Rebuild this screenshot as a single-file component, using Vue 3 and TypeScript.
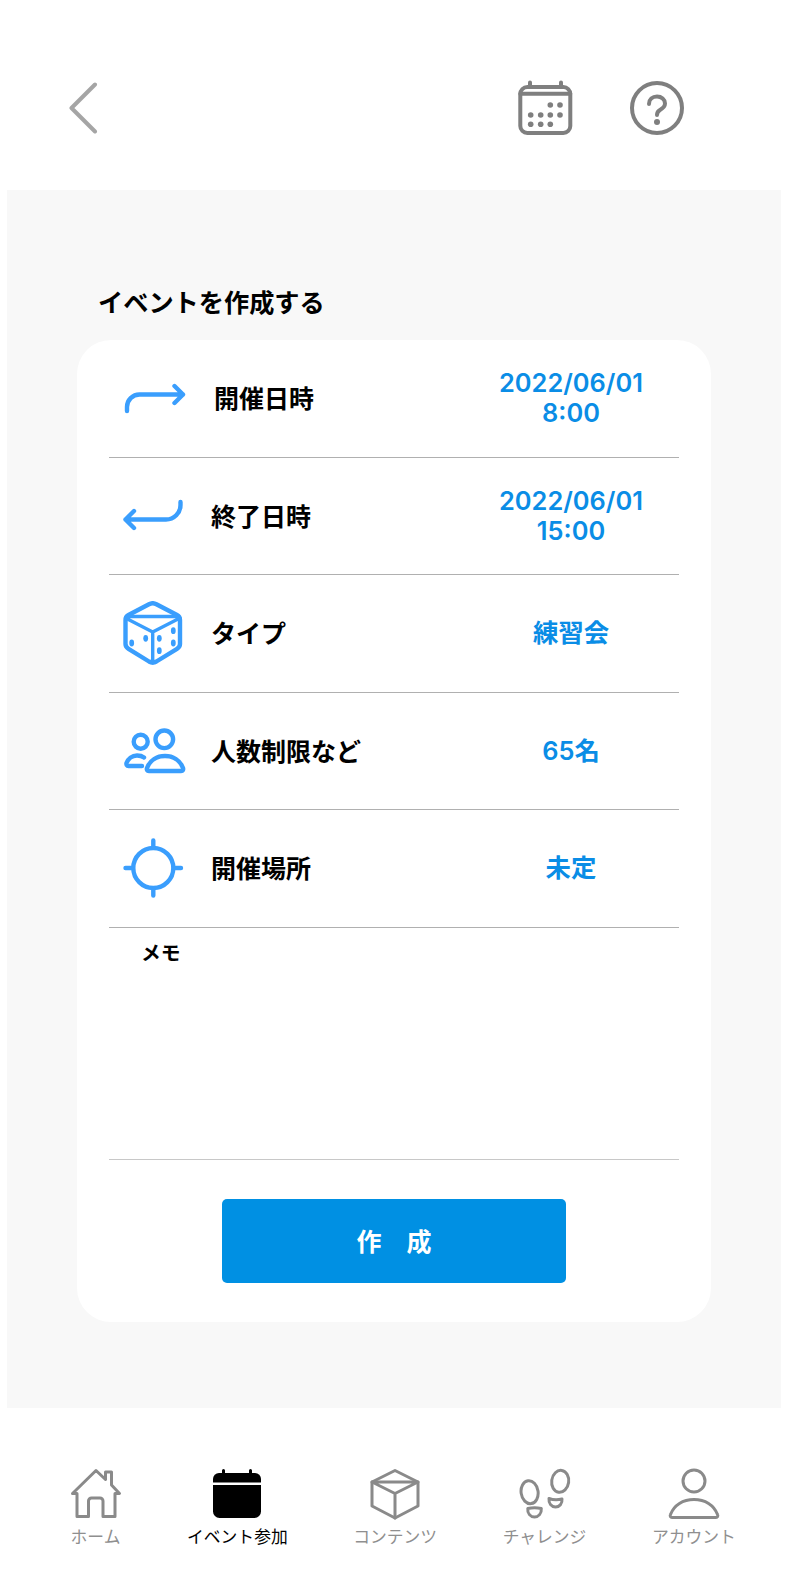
<script setup lang="ts">
// Create-event screen: top bar, settings card, tab bar.
interface Row {
    key: string;
    label: string;
    value: string[];
}

const rows: Row[] = [
    { key: "start", label: "開催日時", value: ["2022/06/01", "8:00"] },
    { key: "end", label: "終了日時", value: ["2022/06/01", "15:00"] },
    { key: "type", label: "タイプ", value: ["練習会"] },
    { key: "people", label: "人数制限など", value: ["65名"] },
    { key: "place", label: "開催場所", value: ["未定"] },
];

const tabs = [
    { key: "home", label: "ホーム" },
    { key: "event", label: "イベント参加" },
    { key: "content", label: "コンテンツ" },
    { key: "challenge", label: "チャレンジ" },
    { key: "account", label: "アカウント" },
];

const dice = [
    [9.7, 42],
    [23.7, 37.3],
    [37.3, 37.3],
    [37.3, 49.7],
    [51.3, 29.7],
    [51.3, 42],
];

const calDots = [
    [33.3, 25],
    [43, 25],
    [13.7, 35],
    [23.7, 35],
    [33.3, 35],
    [43, 35],
    [13.7, 44.3],
    [23.7, 44.3],
    [33.3, 44.3],
];
</script>

<template>
    <div class="screen">
        <header class="topbar">
            <button class="icon-btn back" aria-label="戻る">
                <svg width="30" height="52" viewBox="0 0 30 52" fill="none" stroke="#a5a5a5" stroke-width="4" stroke-linecap="round" stroke-linejoin="round">
                    <path d="M27 2.5 L3.5 26 L27 49.5" />
                </svg>
            </button>
            <div class="topbar-right">
                <svg width="56" height="56" viewBox="0 0 56 56" fill="none" stroke="#7f7f7f" stroke-width="4" stroke-linecap="round">
                    <rect x="3.3" y="7" width="50" height="46" rx="7" />
                    <path d="M3.3 13.7 H53.3 M13 2.5 V6 M44 2.5 V6" />
                    <circle v-for="d in calDots" :key="d.join()" :cx="d[0]" :cy="d[1]" r="2.8" fill="#7f7f7f" stroke="none" />
                </svg>
                <svg width="56" height="56" viewBox="0 0 56 56" fill="none" stroke="#7f7f7f" stroke-width="4" stroke-linecap="round">
                    <circle cx="28" cy="28" r="25" />
                    <path d="M20 24 C20 19.5 23.5 16.5 28 16.5 C32.5 16.5 36 19.5 36 23.5 C36 27 33.5 28.5 31 30 C29 31.2 28 32.5 28 35" />
                    <circle cx="28" cy="42" r="3" fill="#7f7f7f" stroke="none" />
                </svg>
            </div>
        </header>

        <main class="panel">
            <h1 class="title">イベントを作成する</h1>
            <section class="card">
                <div v-for="row in rows" :key="row.key" :class="['row', 'row-' + row.key]">
                    <div class="row-icon">
                        <svg width="64" height="64" viewBox="0 0 64 64" fill="none" stroke="#3a9efd" stroke-width="4.4" stroke-linecap="round" stroke-linejoin="round">
                            <template v-if="row.key === 'start'">
                                <path d="M5 45 V41 A12.5 12.5 0 0 1 17.5 28.5 H61 M52.5 20 L61 28.5 L52.5 37" />
                            </template>
                            <template v-else-if="row.key === 'end'">
                                <path d="M58.5 18 V21 A14.5 14.5 0 0 1 44 35.5 H3.5 M12 27 L3.5 35.5 L12 44" />
                            </template>
                            <template v-else-if="row.key === 'type'">
                                <path d="M27 3.2 Q30.7 1.2 34.4 3.2 L55 14 Q58 15.6 58 19 V43 Q58 46 55 47.8 L34.4 60.5 Q30.7 62.6 27 60.5 L6.5 47.8 Q3.5 46 3.5 43 V19 Q3.5 15.6 6.5 14 Z" />
                                <path d="M3.5 17 L30.7 31 L58 17 M30.7 31 V62 M5 15.5 H56.5" stroke-width="3.4" />
                                <ellipse v-for="d in dice" :key="d.join()" :cx="d[0]" :cy="d[1]" rx="2.4" ry="3.4" fill="#3a9efd" stroke="none" />
                            </template>
                            <template v-else-if="row.key === 'people'">
                                <circle cx="42.3" cy="20.3" r="8.8" />
                                <circle cx="18.7" cy="22.7" r="7" />
                                <path d="M27 52 H59 C61 52 61.5 50.5 61 49 C58 41 51 37 43 37 S28 41 25 49 C24.5 50.5 25 52 27 52 Z" />
                                <path d="M22 38.5 C20 37 17 36.5 15 36.5 C10 36.5 6 40 4.5 44 C4.1 45.5 4.8 47 6.5 47 H20" />
                            </template>
                            <template v-else>
                                <circle cx="31.3" cy="32" r="20" />
                                <path d="M31.3 4.5 V10 M31.3 54 V59.5 M3.5 32 H9.5 M53 32 H59" />
                            </template>
                        </svg>
                    </div>
                    <span class="row-label">{{ row.label }}</span>
                    <div class="row-value">
                        <div v-for="line in row.value" :key="line">{{ line }}</div>
                    </div>
                </div>
                <div class="memo">
                    <span class="memo-label">メモ</span>
                </div>
                <div class="actions">
                    <button class="submit">作　成</button>
                </div>
            </section>
        </main>

        <nav class="tabs">
            <div v-for="tab in tabs" :key="tab.key" :class="['tab', { active: tab.key === 'event' }]">
                <svg width="52" height="52" viewBox="0 0 52 52" fill="none" stroke="#8a8a8a" stroke-width="3" stroke-linecap="round" stroke-linejoin="round">
                    <template v-if="tab.key === 'home'">
                        <path d="M2.5 25.5 L26 2.5 L35.5 11.5 V4 H41.5 V17 L49.5 25.5 H45 V48.5 H33 V33 A3 3 0 0 0 30 30 H21.5 A3 3 0 0 0 18.5 33 V48.5 H7 V25.5 Z" />
                    </template>
                    <template v-else-if="tab.key === 'event'">
                        <path d="M12.5 2.5 V7 M39.5 2.5 V7" stroke="#000" />
                        <path d="M2 14.5 V11 A6 6 0 0 1 8 5 H44 A6 6 0 0 1 50 11 V14.5 Z" fill="#000" stroke="none" />
                        <path d="M2 17 H50 V43.5 A6.5 6.5 0 0 1 43.5 50 H8.5 A6.5 6.5 0 0 1 2 43.5 Z" fill="#000" stroke="none" />
                    </template>
                    <template v-else-if="tab.key === 'content'">
                        <path d="M26 2.5 L49 14 V38 L26 50 L3 38 V14 Z" />
                        <path d="M3 14 L26 25.5 L49 14 H3 M26 25.5 V50" />
                    </template>
                    <template v-else-if="tab.key === 'challenge'">
                        <ellipse cx="10.6" cy="24.2" rx="8.5" ry="11.5" transform="rotate(-8 10.6 24.2)" />
                        <ellipse cx="41.2" cy="13.3" rx="8.5" ry="11" transform="rotate(8 41.2 13.3)" />
                        <path d="M8.8 40.5 C13 39.5 18 39.5 22.3 40.5 C22.8 45.5 19.5 49 15.5 49 C11.5 49 8.2 45.5 8.8 40.5 Z" />
                        <path d="M30 30.5 C34 32 39 32 43 31 C43.5 35.5 40.5 39 36.5 39 C32.5 39 29.5 35.5 30 30.5 Z" />
                    </template>
                    <template v-else>
                        <circle cx="26" cy="13" r="11" />
                        <path d="M4 49.5 H48 C49.5 49.5 50.3 48 49.5 46.5 C46 37 37 31.5 26 31.5 S6 37 2.5 46.5 C1.7 48 2.5 49.5 4 49.5 Z" />
                    </template>
                </svg>
                <span class="tab-label">{{ tab.label }}</span>
            </div>
        </nav>
    </div>
</template>

<style scoped>
.screen {
    width: 792px;
    height: 1576px;
    background: #fff;
    font-family: "Noto Sans CJK JP", "Noto Sans", sans-serif;
    overflow: hidden;
}

.topbar {
    height: 190px;
    box-sizing: border-box;
    padding: 80px 107px 0 67.5px;
    display: flex;
    justify-content: space-between;
    align-items: flex-start;
}
.icon-btn {
    border: none;
    background: none;
    padding: 0;
    display: block;
}
.back {
    padding-top: 2px;
}
.topbar-right {
    display: flex;
    gap: 56px;
}

.panel {
    height: 1218px;
    box-sizing: border-box;
    margin: 0 11px 0 7px;
    padding: 92px 70px 0;
    background: #f8f8f8;
}
.title {
    margin: 0 0 20px 21px;
    font-size: 25.2px;
    line-height: 38px;
    font-weight: 700;
    color: #000;
}

.card {
    width: 634px;
    background: #fff;
    border-radius: 34px;
    padding: 0 32px 39px;
    box-sizing: border-box;
}
.row {
    height: 117.5px;
    box-sizing: border-box;
    border-bottom: 1px solid #b0b0b0;
    display: flex;
    align-items: center;
}
.row-icon {
    width: 102px;
    padding-left: 13px;
    box-sizing: border-box;
    flex: none;
}
.row-icon svg {
    display: block;
}
.row-label {
    flex: 1;
    font-size: 25px;
    line-height: 36px;
    margin-top: -2px;
    font-weight: 700;
    color: #000;
}
.row-start .row-label {
    margin-left: 3px;
}
.row-value {
    width: 200px;
    margin-right: 8px;
    text-align: center;
    font-family: Inter, "Noto Sans CJK JP", sans-serif;
    font-size: 25.4px;
    line-height: 30px;
    font-weight: 600;
    color: #0a8de6;
}

.memo {
    height: 232.5px;
    box-sizing: border-box;
    border-bottom: 1px solid #c8c8c8;
    padding: 9px 0 0 32px;
}
.memo-label {
    font-size: 19.8px;
    line-height: 30px;
    font-weight: 700;
    color: #000;
}

.actions {
    display: flex;
    justify-content: center;
    padding-top: 39px;
}
.submit {
    width: 344px;
    height: 84px;
    border: none;
    border-radius: 5px;
    padding: 0 0 3px;
    background: #0090e3;
    color: #fff;
    font-family: inherit;
    font-size: 25px;
    font-weight: 700;
}

.tabs {
    height: 168px;
    box-sizing: border-box;
    padding: 60px 0 0 69.5px;
    display: flex;
    gap: 65.5px;
}
.tab {
    display: flex;
    flex-direction: column;
    align-items: center;
}
.tab svg {
    display: block;
}
.tab-label {
    margin-top: 6px;
    font-size: 16.8px;
    line-height: 20px;
    color: #8f8f8f;
    white-space: nowrap;
}
.tab.active .tab-label {
    color: #000;
}
</style>
